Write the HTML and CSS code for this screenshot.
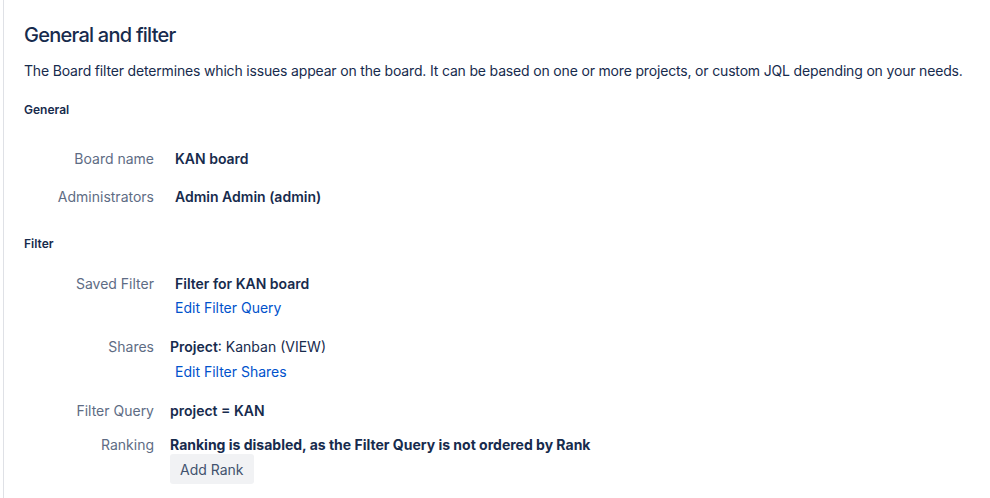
FILE: index.html
```html
<!DOCTYPE html>
<html>
<head>
<meta charset="utf-8">
<link rel="stylesheet" href="styles.css">
</head>
<body>
<div class="page">
  <h2 class="title">General and filter</h2>
  <p class="desc">The Board filter determines which issues appear on the board. It can be based on one or more projects, or custom JQL depending on your needs.</p>

  <h4 class="section section-general">General</h4>
  <div class="field f-name">
    <div class="label">Board name</div>
    <div class="value pad"><strong>KAN board</strong></div>
  </div>
  <div class="field f-admin">
    <div class="label">Administrators</div>
    <div class="value pad"><strong>Admin Admin (admin)</strong></div>
  </div>

  <h4 class="section section-filter">Filter</h4>
  <div class="field f-saved">
    <div class="label">Saved Filter</div>
    <div class="value pad">
      <div><strong>Filter for KAN board</strong></div>
      <div><a class="link" href="#">Edit Filter Query</a></div>
    </div>
  </div>
  <div class="field f-shares">
    <div class="label">Shares</div>
    <div class="value">
      <div><strong>Project</strong>: Kanban (VIEW)</div>
      <div class="pad shares-link"><a class="link" href="#">Edit Filter Shares</a></div>
    </div>
  </div>
  <div class="field f-query">
    <div class="label">Filter Query</div>
    <div class="value"><strong>project = KAN</strong></div>
  </div>
  <div class="field f-rank">
    <div class="label">Ranking</div>
    <div class="value">
      <div class="rank-text"><strong class="heavy">Ranking is disabled, as the Filter Query is not ordered by Rank</strong></div>
      <button class="btn">Add Rank</button>
    </div>
  </div>
</div>
</body>
</html>
```

FILE: styles.css
```css
html, body {
  margin: 0;
  padding: 0;
  background: #ffffff;
}
body {
  font-family: Inter, "Noto Sans", "Liberation Sans", sans-serif;
  color: #172b4d;
  font-size: 14px;
}
.page {
  margin-left: 3px;
  border-left: 1px solid #dfe1e6;
  padding: 23px 0 0 20px;
  min-height: 475px;
}
.title {
  margin: 0;
  font-size: 20px;
  line-height: 24px;
  font-weight: 500;
  letter-spacing: -0.75px;
  color: #172b4d;
}
.desc {
  margin: 14px 0 0;
  line-height: 20px;
  font-size: 14px;
  letter-spacing: -0.17px;
}
.section {
  margin: 0;
  font-size: 12px;
  line-height: 16px;
  font-weight: 600;
  color: #172b4d;
}
.section-general { margin-top: 21px; }
.section-filter { margin-top: 27px; }
.field {
  display: grid;
  grid-template-columns: 130px 1fr;
  column-gap: 16px;
  line-height: 24px;
}
.f-name { margin-top: 29px; }
.f-admin { margin-top: 14px; }
.f-saved { margin-top: 20px; }
.f-shares { margin-top: 15px; }
.f-query { margin-top: 15px; }
.f-rank { margin-top: 10px; }
.label {
  text-align: right;
  color: #5e6c84;
}
.pad { padding-left: 5px; }
.shares-link { padding-top: 1px; }
strong { font-weight: 600; }
strong.heavy { font-weight: 700; }
.link {
  color: #0052cc;
  text-decoration: none;
}
.rank-text { line-height: 24px; }
.btn {
  display: block;
  margin-top: -3px;
  padding: 0 10px;
  height: 30px;
  border: none;
  border-radius: 3px;
  background: #f1f2f4;
  color: #42526e;
  font-family: inherit;
  font-size: 14px;
}
```
